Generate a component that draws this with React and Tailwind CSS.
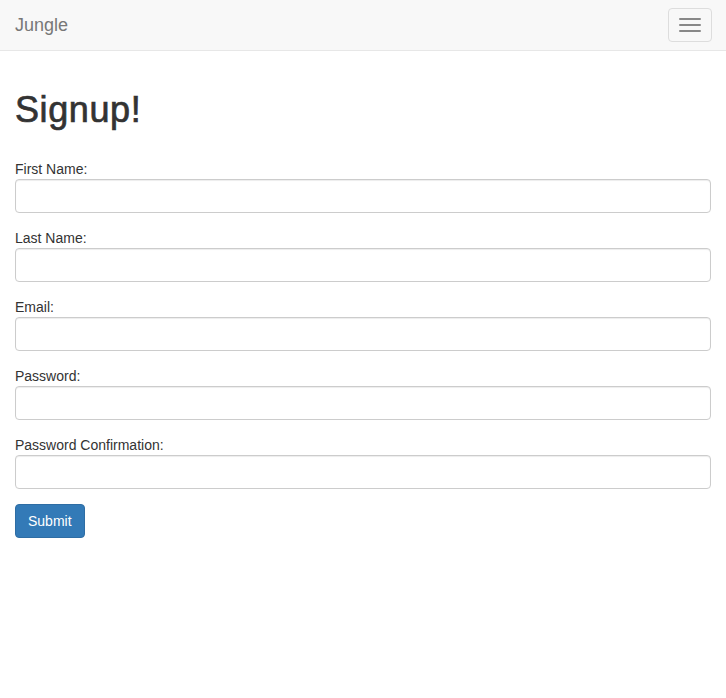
import React, { useState } from 'react';

const fields = [
  { name: 'first_name', label: 'First Name:', type: 'text' },
  { name: 'last_name', label: 'Last Name:', type: 'text' },
  { name: 'email', label: 'Email:', type: 'email' },
  { name: 'password', label: 'Password:', type: 'password' },
  { name: 'password_confirmation', label: 'Password Confirmation:', type: 'password' },
];

export default function App() {
  const [form, setForm] = useState({});

  function handleChange(e) {
    setForm({ ...form, [e.target.name]: e.target.value });
  }

  return (
    <div className="min-h-[698px] bg-white text-[14px] leading-[20px] text-[#333]" style={{ fontFamily: '"Liberation Sans", Arial, sans-serif' }}>
      <nav className="flex h-[51px] items-center justify-between border-b border-[#e7e7e7] bg-[#f8f8f8] pl-[15px] pr-[14px]">
        <a href="#" className="text-[18px] leading-[20px] text-[#777]">Jungle</a>
        <button type="button" className="flex h-[34px] w-[44px] flex-col items-center justify-center gap-[4px] rounded-[4px] border border-[#ddd]">
          <span className="block h-[2px] w-[22px] rounded-[1px] bg-[#888]"></span>
          <span className="block h-[2px] w-[22px] rounded-[1px] bg-[#888]"></span>
          <span className="block h-[2px] w-[22px] rounded-[1px] bg-[#888]"></span>
        </button>
      </nav>

      <div className="px-[15px]">
        <h1 className="mt-[39px] mb-[29px] text-[36px] font-normal leading-[40px] tracking-[0.6px] [-webkit-text-stroke:0.7px_#333]">Signup!</h1>
        <form onSubmit={e => e.preventDefault()}>
          {fields.map(f => (
            <div key={f.name} className="mb-[15px]">
              <label htmlFor={f.name} className="block">{f.label}</label>
              <input
                id={f.name}
                name={f.name}
                type={f.type}
                value={form[f.name] || ''}
                onChange={handleChange}
                className="block h-[34px] w-full rounded-[4px] border border-[#ccc] px-[12px] py-[6px] shadow-[inset_0_1px_1px_rgba(0,0,0,0.075)] outline-none"
              />
            </div>
          ))}
          <button type="submit" className="h-[34px] rounded-[4px] border border-[#2e6da4] bg-[#337ab7] px-[12px] text-white">Submit</button>
        </form>
      </div>
    </div>
  );
}
